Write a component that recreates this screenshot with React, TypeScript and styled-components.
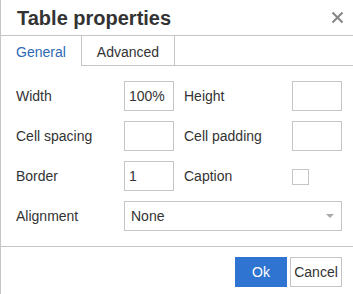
import React from 'react'
import styled, { createGlobalStyle } from 'styled-components'

const GlobalStyle = createGlobalStyle`
  html, body {
    margin: 0;
    padding: 0;
    background: #fff;
  }
  body {
    font-family: "Liberation Sans", Arial, sans-serif;
    font-size: 14px;
    color: #333;
  }
`

const Dialog = styled.div`
  width: 352px;
  height: 294px;
  border-left: 1px solid #c5c5c5;
  background: #fff;
  display: flex;
  flex-direction: column;
`

const Header = styled.div`
  height: 36px;
  flex: none;
  border-bottom: 1px solid #c5c5c5;
  display: flex;
  align-items: center;
  justify-content: space-between;
  padding: 0 6px 0 16px;
  box-sizing: border-box;
`

const Title = styled.div`
  font-size: 20px;
  font-weight: bold;
  color: #333;
  line-height: 24px;
  margin-top: 1px;
`

const Close = styled.button`
  border: 0;
  background: none;
  padding: 0;
  width: 20px;
  height: 20px;
  display: flex;
  align-items: center;
  justify-content: center;
  cursor: pointer;
`

const Tabs = styled.div`
  display: flex;
  flex: none;
  height: 30px;
  border-bottom: 1px solid #c5c5c5;
  box-sizing: border-box;
`

const Tab = styled.div<{ $active?: boolean }>`
  padding: 2px 15px 0;
  display: flex;
  align-items: center;
  border-right: 1px solid #c5c5c5;
  color: ${({ $active }) => ($active ? '#2d6ab5' : '#333')};
  background: #fff;
  height: ${({ $active }) => ($active ? '30px' : '29px')};
  box-sizing: border-box;
  position: relative;
  z-index: ${({ $active }) => ($active ? 1 : 0)};
`

const Body = styled.div`
  flex: none;
  padding: 15px 11px 15px 15px;
  display: flex;
  flex-direction: column;
  gap: 10px;
  border-bottom: 1px solid #c5c5c5;
`

const Row = styled.div`
  display: flex;
  align-items: center;
  height: 30px;
`

const Label = styled.label<{ $second?: boolean }>`
  width: 108px;
  margin-left: ${({ $second }) => ($second ? '10px' : '0')};
  color: #333;
  white-space: nowrap;
`

const Input = styled.input`
  width: 50px;
  height: 30px;
  box-sizing: border-box;
  border: 1px solid #c5c5c5;
  padding: 0 4px;
  font: inherit;
  color: #333;
  outline: none;
`

const CheckBox = styled.span`
  display: block;
  width: 17px;
  height: 16px;
  box-sizing: border-box;
  border: 1px solid #c5c5c5;
  margin-top: 1px;
`

const Select = styled.div`
  width: 218px;
  height: 30px;
  box-sizing: border-box;
  border: 1px solid #c5c5c5;
  padding: 0 6px;
  display: flex;
  align-items: center;
  justify-content: space-between;
`

const Caret = styled.span`
  width: 0;
  height: 0;
  border-left: 4px solid transparent;
  border-right: 4px solid transparent;
  border-top: 4px solid #aaa;
  margin-right: 1px;
`

const Footer = styled.div`
  display: flex;
  justify-content: flex-end;
  gap: 3px;
  padding: 10px 11px 0 0;
`

const Button = styled.button<{ $primary?: boolean }>`
  width: 52px;
  height: 30px;
  box-sizing: border-box;
  font: inherit;
  font-size: 14px;
  padding: 0;
  cursor: pointer;
  border: 1px solid ${({ $primary }) => ($primary ? '#2f74d0' : '#c5c5c5')};
  background: ${({ $primary }) => ($primary ? '#2f74d0' : '#fff')};
  color: ${({ $primary }) => ($primary ? '#fff' : '#333')};
`

export default function App() {
  return (
    <>
      <GlobalStyle />
      <Dialog>
        <Header>
          <Title>Table properties</Title>
          <Close aria-label="Close">
            <svg width="13" height="13" viewBox="0 0 13 13">
              <path d="M1.5 1.5 L11.5 11.5 M11.5 1.5 L1.5 11.5" stroke="#858585" strokeWidth="2" />
            </svg>
          </Close>
        </Header>
        <Tabs>
          <Tab $active>General</Tab>
          <Tab>Advanced</Tab>
        </Tabs>
        <Body>
          <Row>
            <Label>Width</Label>
            <Input defaultValue="100%" />
            <Label $second>Height</Label>
            <Input />
          </Row>
          <Row>
            <Label>Cell spacing</Label>
            <Input />
            <Label $second>Cell padding</Label>
            <Input />
          </Row>
          <Row>
            <Label>Border</Label>
            <Input defaultValue="1" />
            <Label $second>Caption</Label>
            <CheckBox />
          </Row>
          <Row>
            <Label>Alignment</Label>
            <Select>
              <span>None</span>
              <Caret />
            </Select>
          </Row>
        </Body>
        <Footer>
          <Button $primary>Ok</Button>
          <Button>Cancel</Button>
        </Footer>
      </Dialog>
    </>
  )
}
